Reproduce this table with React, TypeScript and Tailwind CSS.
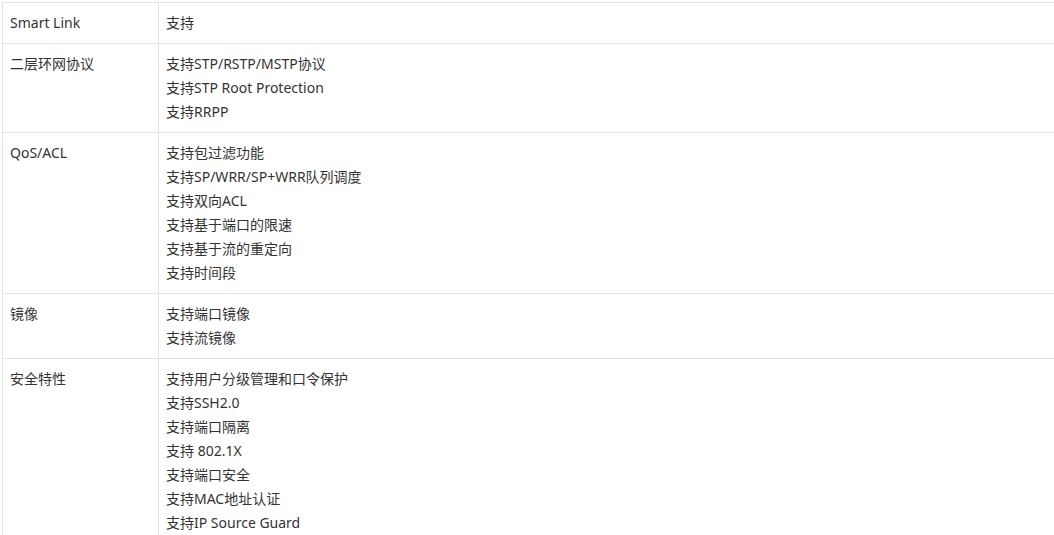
import React from "react";

const rows: { name: string; items: string[] }[] = [
  { name: "Smart Link", items: ["支持"] },
  {
    name: "二层环网协议",
    items: ["支持STP/RSTP/MSTP协议", "支持STP Root Protection", "支持RRPP"],
  },
  {
    name: "QoS/ACL",
    items: [
      "支持包过滤功能",
      "支持SP/WRR/SP+WRR队列调度",
      "支持双向ACL",
      "支持基于端口的限速",
      "支持基于流的重定向",
      "支持时间段",
    ],
  },
  { name: "镜像", items: ["支持端口镜像", "支持流镜像"] },
  {
    name: "安全特性",
    items: [
      "支持用户分级管理和口令保护",
      "支持SSH2.0",
      "支持端口隔离",
      "支持 802.1X",
      "支持端口安全",
      "支持MAC地址认证",
      "支持IP Source Guard",
    ],
  },
];

export default function App() {
  return (
    <div
      className="w-[1054px] h-[535px] overflow-hidden bg-white pt-[2px] pl-[2px] text-[14px] leading-6 text-[#333]"
      style={{ fontFamily: '"Noto Sans", "Noto Sans CJK SC", sans-serif' }}
    >
      <table className="w-[1070px] border-collapse">
        <tbody>
          {rows.map((row) => (
            <tr key={row.name}>
              <td className="w-[156px] border border-[#e3e3e3] px-[7px] py-2 align-top">
                {row.name}
              </td>
              <td className="border border-[#e3e3e3] pl-[7px] pr-2 py-2 align-top">
                {row.items.map((item) => (
                  <div key={item}>{item}</div>
                ))}
              </td>
            </tr>
          ))}
        </tbody>
      </table>
    </div>
  );
}
